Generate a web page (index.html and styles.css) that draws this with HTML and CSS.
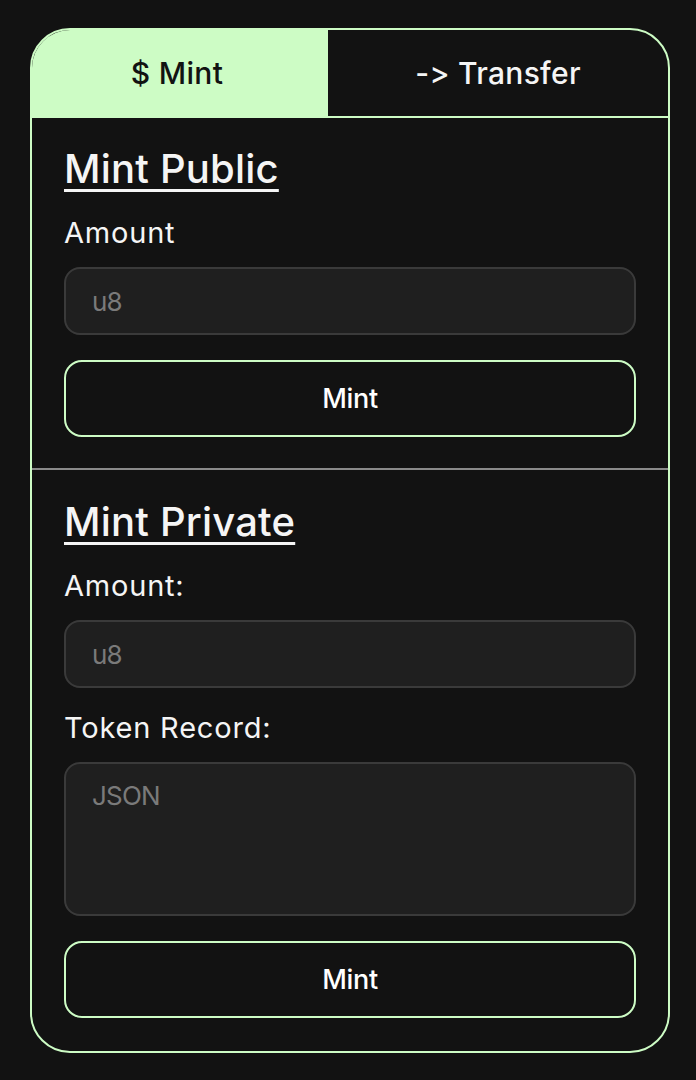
FILE: index.html
```html
<!DOCTYPE html>
<html>
<head>
<meta charset="utf-8">
<link rel="stylesheet" href="styles.css">
</head>
<body>
<div class="card">
  <div class="tabs">
    <div class="tab active">$ Mint</div>
    <div class="tab">-&gt; Transfer</div>
  </div>
  <section class="section">
    <h2 class="title">Mint Public</h2>
    <label class="label">Amount</label>
    <div class="input">u8</div>
    <button class="btn">Mint</button>
  </section>
  <section class="section last">
    <h2 class="title">Mint Private</h2>
    <label class="label">Amount:</label>
    <div class="input">u8</div>
    <label class="label">Token Record:</label>
    <div class="input textarea">JSON</div>
    <button class="btn">Mint</button>
  </section>
</div>
</body>
</html>
```
FILE: styles.css
```css
html, body {
  margin: 0;
  background: #121212;
}
body {
  padding: 28px 26px 0 30px;
  font-family: Inter, "Noto Sans", sans-serif;
  font-variant-ligatures: none;
  font-feature-settings: "calt" 0, "liga" 0;
  color: #f5f5f5;
}
.card {
  width: 640px;
  box-sizing: border-box;
  border: 2px solid #cdfcc5;
  border-radius: 40px;
  overflow: hidden;
  background: #121212;
}
.tabs {
  display: flex;
  height: 86px;
  border-bottom: 2px solid #cdfcc5;
}
.tab {
  flex: 1 1 0;
  display: flex;
  align-items: center;
  justify-content: center;
  font-size: 30px;
  font-weight: 500;
  letter-spacing: 0.3px;
  color: #f5f5f5;
}
.tab.active {
  flex: 0 0 296px;
  background: #cdfcc5;
  color: #121212;
  padding-right: 6px;
  box-sizing: border-box;
}
.section {
  padding: 27px 32px 31px 32px;
  display: flex;
  flex-direction: column;
  border-bottom: 2px solid #8a8a8a;
}
.section.last {
  border-bottom: none;
  padding-top: 28px;
  padding-bottom: 33px;
}
.title {
  margin: 0;
  font-size: 40px;
  font-weight: 500;
  letter-spacing: 0.2px;
  text-decoration: underline;
  text-decoration-thickness: 3px;
  text-underline-offset: 6px;
  line-height: 48px;
}
.label {
  font-size: 29px;
  letter-spacing: 0.8px;
  line-height: 36px;
  margin-top: 22px;
}
.input {
  margin-top: 16px;
  height: 68px;
  box-sizing: border-box;
  border: 2px solid #3a3a3a;
  border-radius: 16px;
  background: #1f1f1f;
  color: #7a7a7a;
  font-size: 26px;
  letter-spacing: -0.8px;
  padding: 0 26px;
  display: flex;
  align-items: center;
}
.textarea {
  height: 154px;
  align-items: flex-start;
  padding-top: 16px;
}
.btn {
  margin-top: 25px;
  height: 77px;
  border: 2px solid #cdfcc5;
  border-radius: 18px;
  background: #121212;
  color: #ffffff;
  font-family: inherit;
  font-size: 27px;
  font-weight: 500;
  letter-spacing: -0.3px;
}
```
